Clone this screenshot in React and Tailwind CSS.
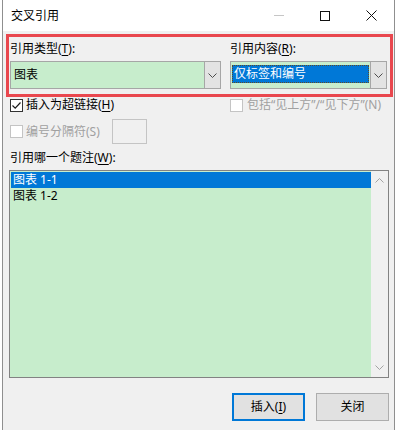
import React from "react";

const Chevron = ({ up, color = "#4d4d4d" }) => (
  <svg width="9" height="5" viewBox="0 0 9 5" fill="none">
    <path
      d={up ? "M0.5 4.5L4.5 0.5L8.5 4.5" : "M0.5 0.5L4.5 4.5L8.5 0.5"}
      stroke={color}
      strokeWidth="1"
    />
  </svg>
);

const Key = ({ children }) => (
  <span className="underline underline-offset-[2px] decoration-1">{children}</span>
);

const Checkbox = ({ checked, disabled }) => (
  <span
    className={`w-[13px] h-[13px] shrink-0 border flex items-center justify-center bg-white ${
      disabled ? "border-[#c4c4c4]" : "border-[#333333]"
    }`}
  >
    {checked && (
      <svg width="11" height="11" viewBox="0 0 11 11" fill="none">
        <path d="M1.5 5.5L4.2 8.2L9.5 2.5" stroke="#1a1a1a" strokeWidth="1.2" />
      </svg>
    )}
  </span>
);

const DropButton = () => (
  <div className="w-[16px] shrink-0 border-l border-[#a6a6a6] bg-[#e3e3e3] flex items-center justify-center">
    <Chevron />
  </div>
);

const App = () => {
  return (
    <div className="w-[400px] h-[430px] bg-white overflow-hidden pl-[2px] text-[12px] text-black font-['Noto_Sans','Noto_Sans_CJK_SC',sans-serif]">
      <div className="w-[393px] h-[430px] border-x border-[#8f8f8f] bg-[#f0f0f0] flex flex-col">
        {/* title bar */}
        <div className="h-[31px] bg-white flex items-center shrink-0">
          <span className="pl-[8px] leading-[16px]">交叉引用</span>
          <div className="ml-auto flex h-full">
            <div className="w-[46px] flex items-center justify-center">
              <span className="block w-[10px] h-px bg-[#c6c6c6]" />
            </div>
            <div className="w-[46px] flex items-center justify-center">
              <span className="block w-[10px] h-[10px] border border-[#111]" />
            </div>
            <div className="w-[46px] flex items-center justify-center">
              <svg width="11" height="11" viewBox="0 0 11 11" fill="none">
                <path d="M0.5 0.5L10.5 10.5M10.5 0.5L0.5 10.5" stroke="#111" strokeWidth="1" />
              </svg>
            </div>
          </div>
        </div>

        {/* highlighted reference row */}
        <div className="mt-[3px] ml-[3px] w-[387px] h-[63px] border-[3px] border-[#e9474e] flex pl-[1px] pt-[4px]">
          <div className="w-[211px] flex flex-col">
            <span className="h-[16px] leading-[16px]">
              引用类型(<Key>T</Key>):
            </span>
            <div className="mt-[4px] h-[28px] w-[211px] flex border border-[#a6a6a6] bg-[#c7edcc]">
              <div className="flex-1 flex items-center pl-[3px] leading-[16px]">图表</div>
              <DropButton />
            </div>
          </div>
          <div className="ml-[9px] w-[157px] flex flex-col">
            <span className="h-[16px] leading-[16px]">
              引用内容(<Key>R</Key>):
            </span>
            <div className="mt-[4px] h-[28px] w-[157px] flex border border-[#a6a6a6] bg-[#c7edcc]">
              <div className="flex-1 pl-[1px] pr-[1px] pt-[3px] pb-[5px] flex">
                <div className="flex-1 bg-[#0078d7] border border-dotted border-[#5c4a2a] text-white flex items-center pl-[1px] leading-[16px]">
                  仅标签和编号
                </div>
              </div>
              <DropButton />
            </div>
          </div>
        </div>

        {/* checkbox rows */}
        <div className="h-[16px] flex items-center">
          <div className="w-[227px] pl-[7px] flex items-center">
            <Checkbox checked />
            <span className="ml-[3px] leading-[16px]">
              插入为超链接(<Key>H</Key>)
            </span>
          </div>
          <div className="flex items-center">
            <Checkbox disabled />
            <span className="ml-[4px] leading-[16px] text-[#a0a0a0]">包括“见上方”/“见下方”(N)</span>
          </div>
        </div>

        <div className="mt-[6px] h-[25px] flex items-center pl-[7px]">
          <Checkbox disabled />
          <span className="ml-[3px] leading-[16px] text-[#a0a0a0]">编号分隔符(S)</span>
          <div className="ml-[12px] w-[35px] h-[25px] border border-[#c4c4c4] bg-[#f0f0f0]" />
        </div>

        <span className="mt-[6px] pl-[7px] h-[16px] leading-[16px]">
          引用哪一个题注(<Key>W</Key>):
        </span>

        {/* caption list */}
        <div className="mt-[4px] ml-[6px] w-[380px] h-[208px] border border-[#828282] bg-[#c7edcc] flex">
          <div className="flex-1 pl-[1px] pt-[1px] flex flex-col">
            <div className="h-[16px] bg-[#0078d7] text-white flex items-center pl-[2px] leading-[16px]">
              图表 1-1
            </div>
            <div className="h-[16px] flex items-center pl-[2px] leading-[16px]">图表 1-2</div>
          </div>
          <div className="w-[17px] bg-[#f0f0f0] flex flex-col items-center justify-between py-[7px]">
            <Chevron up color="#a3a3a3" />
            <Chevron color="#a3a3a3" />
          </div>
        </div>

        {/* buttons */}
        <div className="mt-[15px] flex justify-end pr-[5px] gap-[11px]">
          <button className="w-[73px] h-[28px] border-2 border-[#0078d7] bg-[#e1e1e1] leading-[16px]">
            插入(<Key>I</Key>)
          </button>
          <button className="w-[73px] h-[28px] border border-[#adadad] bg-[#e1e1e1] leading-[16px]">
            关闭
          </button>
        </div>
      </div>
    </div>
  );
};

export default App;
